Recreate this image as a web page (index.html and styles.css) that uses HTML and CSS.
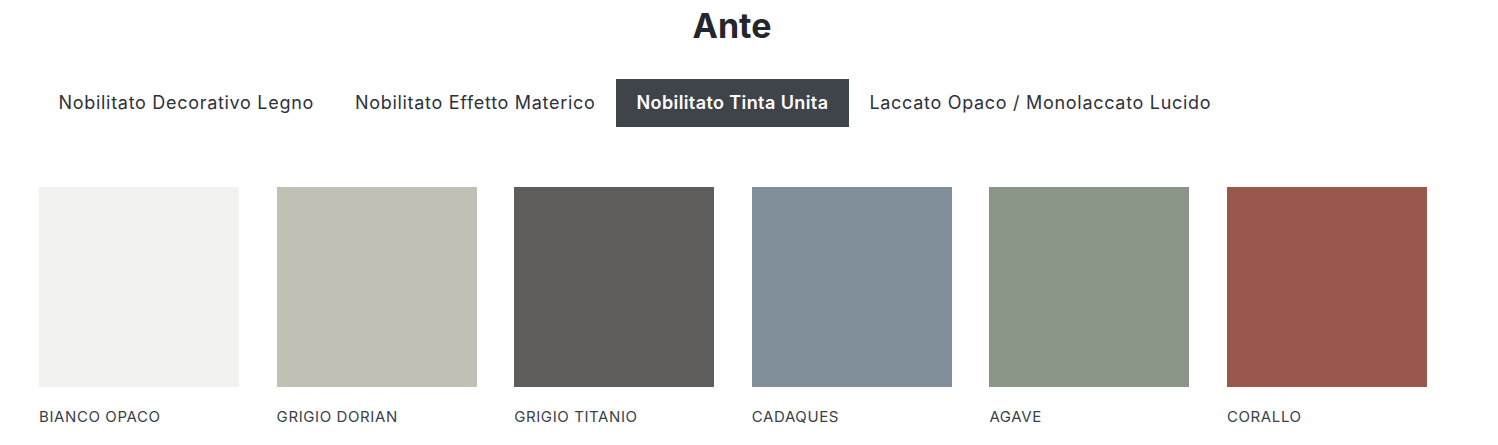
FILE: index.html
```html
<!DOCTYPE html>
<html lang="it">
<head>
<meta charset="utf-8">
<title>Ante</title>
<link rel="stylesheet" href="styles.css">
</head>
<body>
<main class="page">
  <h1 class="title">Ante</h1>
  <nav class="tabs">
    <button class="tab">Nobilitato Decorativo Legno</button>
    <button class="tab">Nobilitato Effetto Materico</button>
    <button class="tab tab-active">Nobilitato Tinta Unita</button>
    <button class="tab">Laccato Opaco / Monolaccato Lucido</button>
  </nav>
  <section class="swatches">
    <figure class="swatch"><div class="chip" style="background:#f2f3ee"></div><figcaption class="label">BIANCO OPACO</figcaption></figure>
    <figure class="swatch"><div class="chip" style="background:#c1c0b4"></div><figcaption class="label">GRIGIO DORIAN</figcaption></figure>
    <figure class="swatch"><div class="chip" style="background:#5e5d5b"></div><figcaption class="label">GRIGIO TITANIO</figcaption></figure>
    <figure class="swatch"><div class="chip" style="background:#818f9a"></div><figcaption class="label">CADAQUES</figcaption></figure>
    <figure class="swatch"><div class="chip" style="background:#8a9487"></div><figcaption class="label">AGAVE</figcaption></figure>
    <figure class="swatch"><div class="chip" style="background:#9a584c"></div><figcaption class="label">CORALLO</figcaption></figure>
  </section>
</main>
</body>
</html>
```
FILE: styles.css
```css
html, body {
  margin: 0;
  padding: 0;
  background: #ffffff;
}
body {
  font-family: "Inter", "Liberation Sans", sans-serif;
  color: #2e323a;
}
.page {
  width: 1464px;
  padding: 0 39px;
  box-sizing: border-box;
}
.title {
  margin: 0;
  padding-top: 6px;
  text-align: center;
  font-size: 34px;
  font-weight: 700;
  line-height: 40px;
  color: #23262c;
}
.tabs {
  display: flex;
  margin-top: 33px;
  margin-left: -1px;
}
.tab {
  border: 0;
  background: transparent;
  font-family: inherit;
  font-size: 18px;
  letter-spacing: 0.7px;
  color: #2e323a;
  height: 48px;
  padding: 0 20.5px 2px;
  cursor: pointer;
}
.tab-active {
  background: #3f434a;
  color: #ffffff;
  font-weight: 600;
  letter-spacing: 0.4px;
}
.swatches {
  display: grid;
  grid-template-columns: repeat(6, 200px);
  column-gap: 37.6px;
  margin-top: 60px;
}
.swatch {
  margin: 0;
}
.chip {
  width: 200px;
  height: 200px;
}
.label {
  margin-top: 20px;
  font-size: 15px;
  line-height: 20px;
  letter-spacing: 0.6px;
  color: #3a3f4a;
}
```
